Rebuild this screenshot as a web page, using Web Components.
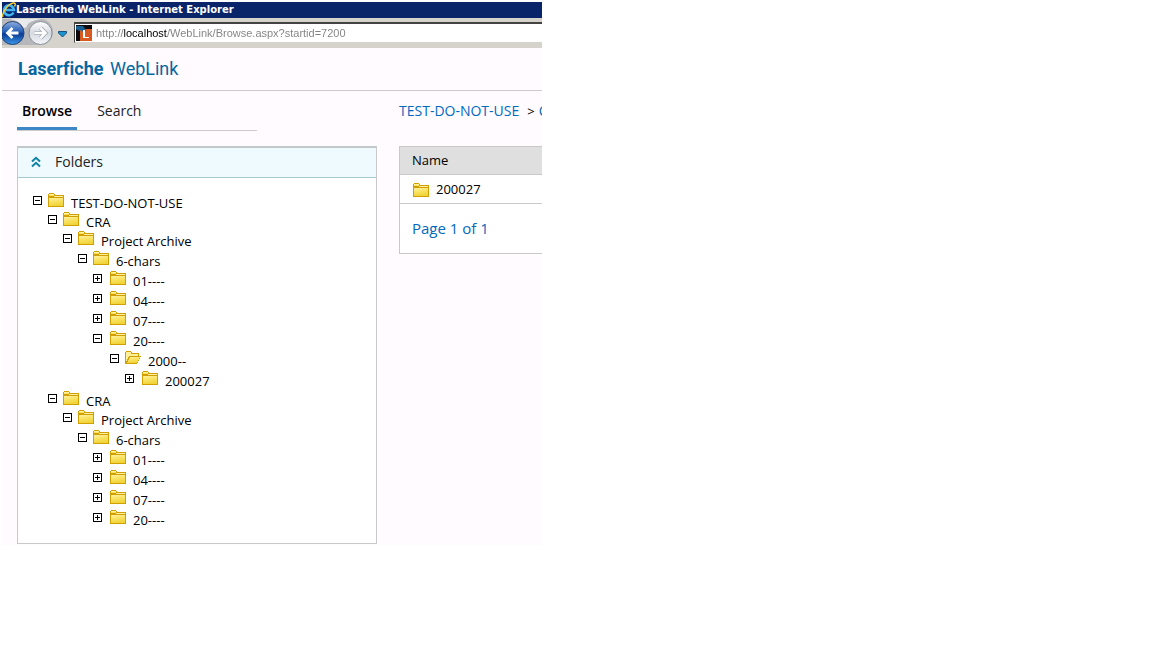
<!DOCTYPE html>
<html lang="en">
<head>
<meta charset="utf-8">
<meta name="viewport" content="width=device-width, initial-scale=1">
<title>Laserfiche WebLink</title>
<style>
  body { margin: 0; background: #fff; font: 13px/20px "Open Sans", "Noto Sans", sans-serif; color: #000; }
</style>
</head>
<body>
<browser-window caption="Laserfiche WebLink - Internet Explorer" address="http://localhost/WebLink/Browse.aspx?startid=7200">
  <weblink-page>
    <tab-strip slot="side"></tab-strip>
    <folder-panel slot="side" heading="Folders">
      <tree-node label="TEST-DO-NOT-USE" tight>
        <tree-node label="CRA" tight>
          <tree-node label="Project Archive">
            <tree-node label="6-chars">
              <tree-node label="01----" wide collapsed></tree-node>
              <tree-node label="04----" wide collapsed></tree-node>
              <tree-node label="07----" wide collapsed></tree-node>
              <tree-node label="20----" wide>
                <tree-node label="2000--" current>
                  <tree-node label="200027" wide collapsed></tree-node>
                </tree-node>
              </tree-node>
            </tree-node>
          </tree-node>
        </tree-node>
        <tree-node label="CRA" tight>
          <tree-node label="Project Archive">
            <tree-node label="6-chars">
              <tree-node label="01----" wide collapsed></tree-node>
              <tree-node label="04----" wide collapsed></tree-node>
              <tree-node label="07----" wide collapsed></tree-node>
              <tree-node label="20----" wide collapsed></tree-node>
            </tree-node>
          </tree-node>
        </tree-node>
      </tree-node>
    </folder-panel>
    <crumb-trail></crumb-trail>
    <file-list></file-list>
  </weblink-page>
</browser-window>

<script>
class Base extends HTMLElement {
  connectedCallback() {
    if (this.shadowRoot) return;
    this.attachShadow({ mode: "open" }).innerHTML = this.view();
  }
}

customElements.define("folder-icon", class extends Base {
  view() {
    const closed = `
      <path d="M0 1h1V0h5v1h1v1h9v12H0z" fill="#d19f00"/>
      <path d="M1 1h5v1H1z" fill="#fff3a4"/>
      <path d="M1 2h5v1H1z" fill="#ffe35c"/>
      <path d="M7 3h8v1H6v1H1V4h5V3z" fill="#fff0a0"/>
      <path d="M1 5h14v8H1z" fill="url(#g)"/>
      <path d="M1 4h5v1H1z" fill="#d19f00"/>`;
    const open = `
      <path d="M0 1h1V0h5v1h1v1h7v3h2v1h-1v2h-1v2h-1v2h-1v1H0z" fill="#d19f00"/>
      <path d="M1 1h5v2h7v2H4v1H3v2H2v2H1z" fill="#fff09a"/>
      <path d="M5 6h10l-3 6H2z" fill="url(#g)"/>`;
    return `<style>
        :host { display: block; flex: none; width: 16px; height: 14px; }
        svg { display: block; }
      </style>
      <svg width="16" height="14" viewBox="0 0 16 14" shape-rendering="crispEdges" aria-hidden="true">
        <defs><linearGradient id="g" x1="0" y1="0" x2=".3" y2="1">
          <stop offset="0" stop-color="#fff2a0"/><stop offset=".5" stop-color="#f9e263"/><stop offset="1" stop-color="#f1d43a"/>
        </linearGradient></defs>
        ${this.hasAttribute("open") ? open : closed}
      </svg>`;
  }
});

customElements.define("tree-node", class extends Base {
  view() {
    const collapsed = this.hasAttribute("collapsed");
    const label = this.getAttribute("label");
    return `<style>
        :host { display: block; --cell: 15px; --row: 20px; }
        :host([wide]) { --cell: 17px; }
        :host([tight]) { --row: 19px; }
        .row { display: flex; align-items: flex-start; height: var(--row); }
        button { flex: none; width: var(--cell); height: 14px; padding: 3px 0 0; border: 0; background: none; display: flex; align-items: flex-start; }
        a { color: #000; text-decoration: none; margin-left: 7px; line-height: 20px; white-space: nowrap; }
        .kids { margin-left: var(--cell); }
      </style>
      <div class="row">
        <button type="button" aria-label="${collapsed ? "Expand" : "Collapse"} ${label}" aria-expanded="${!collapsed}">
          <svg width="9" height="9" viewBox="0 0 9 9" shape-rendering="crispEdges">
            <path d="M0 0h9v9H0zM1 1v7h7V1z" fill="#000" fill-rule="evenodd"/>
            <path d="M2 4h5v1H2z${collapsed ? "M4 2h1v5H4z" : ""}" fill="#000"/>
          </svg>
        </button>
        <folder-icon ${this.hasAttribute("current") ? "open" : ""}></folder-icon>
        <a href="#">${label}</a>
      </div>
      <div class="kids"><slot></slot></div>`;
  }
});

customElements.define("folder-panel", class extends Base {
  view() {
    return `<style>
        :host { display: block; box-sizing: border-box; margin-top: 15px; border: 1px solid #c9c9c9; border-top: 2px solid #c0c8ca; background: #fff; }
        button { display: flex; align-items: center; gap: 14px; width: 100%; height: 30px; box-sizing: border-box; padding: 0 13px 1px; border: 0;
          border-bottom: 1px solid #a3c9d1; background: #effaff; font: 14px/20px "Open Sans", sans-serif; color: #222; text-align: left; }
        .tree { padding: 15px 15px 13px; }
      </style>
      <button type="button" aria-expanded="true">
        <svg width="10" height="12" viewBox="0 0 10 12" fill="none" stroke="#0e83a5" stroke-width="2" aria-hidden="true"><path d="M1 5.5L5 1.8 9 5.5M1 10.5L5 6.8 9 10.5"/></svg>
        <span>${this.getAttribute("heading")}</span>
      </button>
      <div class="tree"><slot></slot></div>`;
  }
});

customElements.define("tab-strip", class extends Base {
  view() {
    return `<style>
        :host { display: block; width: 240px; border-bottom: 1px solid #ccc; }
        nav { display: flex; gap: 15px; font-size: 14px; }
        a { box-sizing: border-box; height: 39px; padding: 10px 5px 0; color: #222; text-decoration: none; border-bottom: 3px solid transparent; }
        a[aria-current] { color: #000; font-weight: 600; border-color: #3b87c8; }
      </style>
      <nav><a href="#browse" aria-current="page">Browse</a><a href="#search">Search</a></nav>`;
  }
});

customElements.define("crumb-trail", class extends Base {
  view() {
    return `<style>
        :host { display: block; height: 55px; box-sizing: border-box; padding-top: 10px; font-size: 14px; white-space: nowrap; }
        a { color: #006abe; text-decoration: none; }
        span { font-size: 13px; margin: 0 4px 0 8px; }
      </style>
      <nav aria-label="Path"><a href="#">TEST-DO-NOT-USE</a><span>&gt;</span><a href="#">C</a></nav>`;
  }
});

customElements.define("file-list", class extends Base {
  view() {
    return `<style>
        :host { display: block; border: 1px solid #c9c9c9; border-right: 0; background: #fff; }
        table { width: 100%; border-collapse: collapse; }
        th, td { height: 28px; padding: 0 12px; border-bottom: 1px solid #c9c9c9; text-align: left; font-weight: 400; }
        th { height: 25px; padding-bottom: 2px; background: #dfdfdf; }
        .name { display: flex; align-items: center; gap: 7px; padding-left: 1px; color: #000; text-decoration: none; }
        folder-icon { margin-top: 2px; }
        p { margin: 0; padding: 14px 12px 15px; color: #006abe; font-size: 15px; }
      </style>
      <table>
        <thead><tr><th scope="col">Name</th></tr></thead>
        <tbody><tr><td><a class="name" href="#"><folder-icon></folder-icon><span>200027</span></a></td></tr></tbody>
      </table>
      <p>Page 1 of 1</p>`;
  }
});

customElements.define("weblink-page", class extends Base {
  view() {
    return `<style>
        :host { display: block; background: #fffbff; }
        header { height: 42px; border-bottom: 1px solid #ccc; padding-left: 16px; font: 18px/42px Roboto, sans-serif; font-variant-ligatures: none; color: #0667a0; }
        b { font-weight: 700; margin-right: 2px; }
        .cols { display: grid; grid-template-columns: 360px minmax(0, 1fr); column-gap: 22px; padding: 0 0 1px 15px; }
        main { min-width: 0; }
      </style>
      <header><b>Laserfiche</b> WebLink</header>
      <div class="cols">
        <aside><slot name="side"></slot></aside>
        <main><slot></slot></main>
      </div>`;
  }
});

customElements.define("browser-window", class extends Base {
  view() {
    return `<style>
        :host { display: block; max-width: 540px; margin: 2px 0 0 2px; overflow: hidden; }
        .title { display: flex; align-items: center; height: 16px; background: #0a246a; color: #fff; font: bold 10px/14px "DejaVu Sans", sans-serif; white-space: nowrap; }
        .title svg { flex: none; }
        .bar { display: flex; height: 30px; background: #d6d2cc; }
        .nav { display: flex; align-items: center; flex: none; width: 72px; }
        button { border: 0; padding: 0; background: none; display: block; }
        .field { flex: 1; display: flex; align-items: center; gap: 4px; min-width: 0; height: 21px; box-sizing: border-box; margin-top: 4px; padding-left: 1px;
          background: #fff; border-top: 2px solid #45433f; border-left: 1px solid #45433f; border-bottom: 1px solid #d6d2cc; }
        .field svg { flex: none; }
        input { flex: 1; min-width: 0; height: 18px; border: 0; padding: 0; outline: 0; font: 11px/18px "Liberation Sans", sans-serif; color: transparent;
          background: linear-gradient(90deg, #808080 28px, #000 28px 71px, #808080 71px); -webkit-background-clip: text; background-clip: text; }
      </style>
      <div class="title">
        <svg width="14" height="16" viewBox="0 0 14 16" aria-hidden="true">
          <path d="M11.5 10.5A5 5 0 1 1 12 8H3" fill="none" stroke="#43b5ee" stroke-width="2.6"/>
          <path d="M1 15C-1 12 6 2 11 1c3-.5 2.5 2 1.500 3.500" fill="none" stroke="#f3cf3d" stroke-width="1.400"/>
        </svg>
        <span>${this.getAttribute("caption")}</span>
      </div>
      <div class="bar">
        <div class="nav">
          <button type="button" aria-label="Back and forward">
            <svg width="72" height="30" viewBox="0 0 72 30">
              <defs>
                <linearGradient id="b" x2="0" y2="1"><stop offset="0" stop-color="#8fb0e0"/><stop offset=".42" stop-color="#2c62b8"/><stop offset=".55" stop-color="#0b3b94"/><stop offset="1" stop-color="#3c9bee"/></linearGradient>
                <linearGradient id="f" x2="0" y2="1"><stop offset="0" stop-color="#fff"/><stop offset=".5" stop-color="#d5dae1"/><stop offset="1" stop-color="#f5f7fa"/></linearGradient>
              </defs>
              <path d="M0 2H39a12 13 0 0 1 0 26H0z" fill="#b5b7ba"/>
              <path d="M0 2H39q-13 2-14 7 -2 4-5 0Q18 4 8 2z" fill="#e9eaec"/>
              <circle cx="10.500" cy="16" r="11.500" fill="url(#b)" stroke="#29426f"/>
              <circle cx="38.500" cy="16" r="11.500" fill="url(#f)" stroke="#8a909a"/>
              <path d="M16.500 16H6M10.500 11L5.500 16l5 5" fill="none" stroke="#fff" stroke-width="2.800"/>
              <path d="M32.500 16H43M38.500 11l5 5-5 5" fill="none" stroke="#9da4ae" stroke-width="4"/>
              <path d="M32.500 16H43M38.500 11l5 5-5 5" fill="none" stroke="#fff" stroke-width="2.500"/>
              <path d="M56.500 14.500h8v1.500l-4 4-4-4z" fill="#1a94cf" stroke="#174f80"/>
            </svg>
          </button>
        </div>
        <div class="field">
          <svg width="16" height="16" viewBox="0 0 16 16" aria-hidden="true">
            <path d="M0 0h16v16H0z" fill="#0b0b0d"/><path d="M4 4h12v12H4z" fill="#d85a20"/>
            <path d="M0 1h7l3 4-2 3-3-3-2 1-3-2z" fill="#175f91"/>
            <path d="M7 5h2v7h4v1H7z" fill="#fff"/>
          </svg>
          <input type="text" aria-label="Address" spellcheck="false" value="${this.getAttribute("address")}">
        </div>
      </div>
      <slot></slot>`;
  }
});
</script>
</body>
</html>
